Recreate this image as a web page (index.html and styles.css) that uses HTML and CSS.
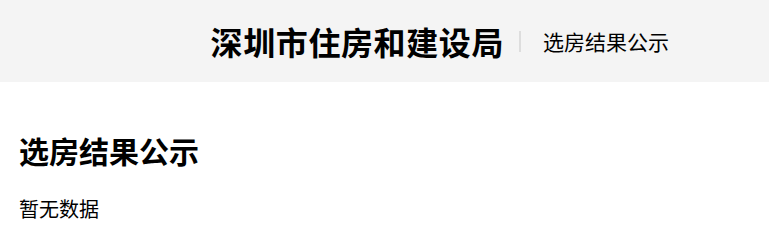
FILE: index.html
```html
<!DOCTYPE html>
<html lang="zh-CN">
<head>
    <meta charset="UTF-8">
    <meta name="viewport" content="width=device-width, initial-scale=1.0">
    <title>选房结果公示</title>
    <link rel="stylesheet" href="styles.css">
</head>
<body>

    <header>
        <div class="header-inner">
            <h1 class="site-name">深圳市住房和建设局</h1>
            <span class="divider"></span>
            <span class="page-name">选房结果公示</span>
        </div>
    </header>

    <section class="content">
        <h2>选房结果公示</h2>
        <p class="empty">暂无数据</p>
    </section>

</body>
</html>
```

FILE: styles.css
```css
body {
    font-family: "Noto Sans CJK SC", "Liberation Sans", sans-serif;
    margin: 0;
    padding: 0;
    background-color: #fff;
    color: #000;
}

header {
    background-color: #f4f4f4;
    height: 82px;
}

.header-inner {
    display: flex;
    align-items: center;
    justify-content: flex-end;
    height: 100%;
    padding-right: 100px;
}

.site-name {
    margin: 0;
    font-size: 32px;
    font-weight: bold;
    letter-spacing: 0.6px;
}

.divider {
    width: 2px;
    height: 21px;
    background-color: #ddd;
    margin: 0 22px 0 15px;
}

.page-name {
    font-size: 21px;
}

.content {
    padding: 0 19px;
}

.content h2 {
    margin: 46px 0 0;
    font-size: 30px;
    font-weight: bold;
    line-height: 44px;
}

.empty {
    margin: 22px 0 0;
    font-size: 20px;
    line-height: 30px;
}
```
